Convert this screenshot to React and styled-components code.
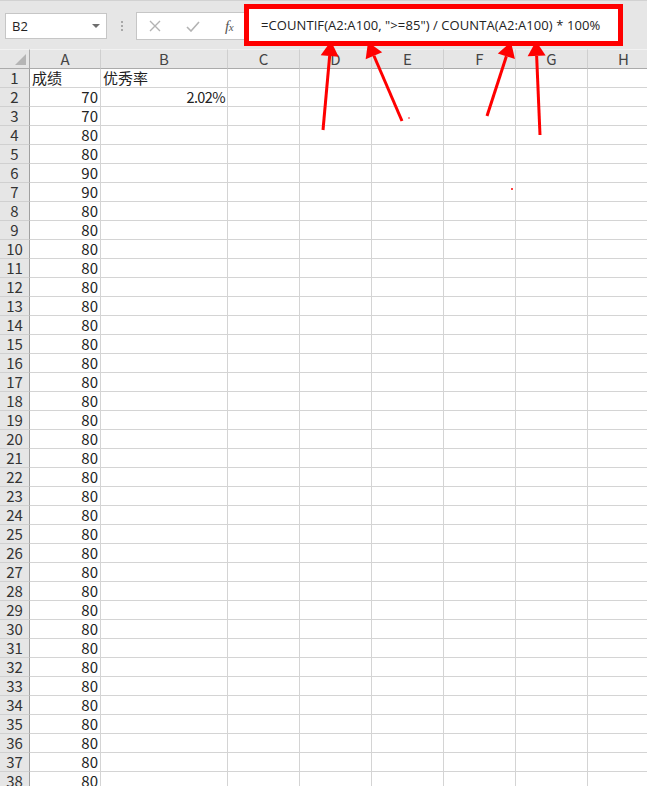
import React from 'react';
import styled, { createGlobalStyle } from 'styled-components';

const Global = createGlobalStyle`
  html, body { margin: 0; padding: 0; background: #fff; overflow: hidden; }
  body { width: 647px; height: 786px; font-family: "Noto Sans CJK SC", "Liberation Sans", sans-serif; }
`;

const Page = styled.div`
  position: relative;
  width: 647px;
  height: 786px;
  overflow: hidden;
  background: #fff;
`;

const Toolbar = styled.div`
  box-sizing: border-box;
  height: 49px;
  background: #e6e6e6;
  border-top: 1px solid #d2d2d2;
  display: flex;
  align-items: flex-start;
  padding-left: 5px;
`;

const NameBox = styled.div`
  box-sizing: border-box;
  margin-top: 12px;
  width: 102px;
  height: 26px;
  background: #fff;
  border: 1px solid #c6c6c6;
  display: flex;
  align-items: center;
  justify-content: space-between;
  padding: 0 6px 0 6px;
  font-family: "Open Sans", "Noto Sans", sans-serif;
  font-size: 13px;
  color: #222;
`;

const Caret = styled.span`
  width: 0;
  height: 0;
  border-left: 4px solid transparent;
  border-right: 4px solid transparent;
  border-top: 4px solid #6e6e6e;
`;

const Grip = styled.div`
  margin: 20px 13px 0 14px;
  display: flex;
  flex-direction: column;
  gap: 2px;
  span { width: 2px; height: 2px; background: #a8a8a8; }
`;

const FxGroup = styled.div`
  box-sizing: border-box;
  margin-top: 11px;
  width: 112px;
  height: 28px;
  background: #fff;
  border: 1px solid #c6c6c6;
  border-right: none;
  display: flex;
  align-items: center;
  padding-left: 11px;
`;

const IconSlot = styled.div`
  width: ${p => p.w}px;
  display: flex;
  align-items: center;
  justify-content: center;
`;

const FxText = styled.span`
  font-family: "Liberation Serif", "DejaVu Serif", serif;
  font-style: italic;
  font-size: 15px;
  color: #555;
  letter-spacing: -0.5px;
  sub { font-size: 11px; vertical-align: 0; }
`;

const FormulaField = styled.div`
  box-sizing: border-box;
  margin-top: 3px;
  margin-left: -4px;
  width: 379px;
  height: 42px;
  border: 5px solid #ff0000;
  background: #fff;
  display: flex;
  align-items: center;
  padding-left: 12px;
  font-family: "Open Sans", "Noto Sans", sans-serif;
  font-size: 13px;
  letter-spacing: 0.08px;
  color: #222;
  white-space: nowrap;
  position: relative;
  z-index: 1;
`;

const Sheet = styled.div`
  display: grid;
  grid-template-columns: 30px 71px 127px repeat(6, 72px);
  grid-auto-rows: 19px;
  grid-template-rows: 20px;
  font-size: 15px;
  color: #222;
`;

const Cell = styled.div`
  box-sizing: border-box;
  border-right: 1px solid #d4d4d4;
  border-bottom: 1px solid #d4d4d4;
  display: flex;
  align-items: flex-end;
  justify-content: ${p => (p.right ? 'flex-end' : 'flex-start')};
  padding: 0 2px 0 2px;
  line-height: 18px;
  white-space: nowrap;
`;

const Pct = styled.span`
  letter-spacing: -0.6px;
  font-size: 14.5px;
`;

const ColHead = styled.div`
  box-sizing: border-box;
  background: #e6e6e6;
  border-right: 1px solid #cfcfcf;
  border-bottom: 1px solid #ababab;
  border-top: 1px solid #f2f2f2;
  display: flex;
  align-items: center;
  justify-content: center;
  color: #444;
  line-height: 18px;
`;

const Corner = styled(ColHead)`
  position: relative;
  border-right: 1px solid #ababab;
  &::after {
    content: '';
    position: absolute;
    right: 3px;
    bottom: 3px;
    width: 0;
    height: 0;
    border-left: 11px solid transparent;
    border-bottom: 11px solid #b5b5b5;
  }
`;

const RowHead = styled.div`
  box-sizing: border-box;
  background: #e6e6e6;
  border-right: 1px solid #a0a0a0;
  border-bottom: 1px solid #d0d0d0;
  display: flex;
  align-items: flex-end;
  justify-content: center;
  color: #333;
  line-height: 18px;
`;

const Overlay = styled.svg`
  position: absolute;
  left: 0;
  top: 0;
  pointer-events: none;
  z-index: 2;
`;

const cols = ['A', 'B', 'C', 'D', 'E', 'F', 'G', 'H'];
const values = [70, 70, 80, 80, 90, 90];

const arrows = [
  [323, 130, 331, 41],
  [402, 121, 368, 42],
  [487, 116, 511, 42],
  [540, 135, 536, 41],
];

function Arrow({ sx, sy, tx, ty }) {
  const dx = tx - sx;
  const dy = ty - sy;
  const len = Math.hypot(dx, dy);
  const ux = dx / len;
  const uy = dy / len;
  const bx = tx - ux * 15;
  const by = ty - uy * 15;
  const nx = -uy * 9;
  const ny = ux * 9;
  return (
    <g>
      <line x1={sx} y1={sy} x2={bx} y2={by} stroke="#ff0000" strokeWidth="3" />
      <polygon points={`${tx},${ty} ${bx + nx},${by + ny} ${bx - nx},${by - ny}`} fill="#ff0000" />
    </g>
  );
}

export default function App() {
  const rows = [];
  for (let r = 1; r <= 38; r++) {
    const cells = [<RowHead key="h">{r}</RowHead>];
    cols.forEach(c => {
      let content = null;
      let right = false;
      if (r === 1 && c === 'A') content = '成绩';
      else if (r === 1 && c === 'B') content = '优秀率';
      else if (c === 'A') {
        content = values[r - 2] !== undefined ? values[r - 2] : 80;
        right = true;
      } else if (r === 2 && c === 'B') {
        content = <Pct>2.02%</Pct>;
        right = true;
      }
      cells.push(
        <Cell key={c} right={right}>
          {content}
        </Cell>
      );
    });
    rows.push(<React.Fragment key={r}>{cells}</React.Fragment>);
  }

  return (
    <Page>
      <Global />
      <Toolbar>
        <NameBox>
          B2
          <Caret />
        </NameBox>
        <Grip>
          <span />
          <span />
          <span />
        </Grip>
        <FxGroup>
          <IconSlot w={14}>
            <svg width="12" height="12" viewBox="0 0 12 12">
              <path d="M1 1 L11 11 M11 1 L1 11" stroke="#b3b3b3" strokeWidth="1.4" fill="none" />
            </svg>
          </IconSlot>
          <IconSlot w={24} />
          <IconSlot w={14}>
            <svg width="14" height="11" viewBox="0 0 14 11">
              <path d="M1 6 L5 10 L13 1" stroke="#b3b3b3" strokeWidth="1.6" fill="none" />
            </svg>
          </IconSlot>
          <IconSlot w={21} />
          <IconSlot w={16}>
            <FxText>
              f<sub>x</sub>
            </FxText>
          </IconSlot>
        </FxGroup>
        <FormulaField>=COUNTIF(A2:A100, "&gt;=85") / COUNTA(A2:A100) * 100%</FormulaField>
      </Toolbar>
      <Sheet>
        <Corner />
        {cols.map(c => (
          <ColHead key={c}>{c}</ColHead>
        ))}
        {rows}
      </Sheet>
      <Overlay width="647" height="786" viewBox="0 0 647 786">
        {arrows.map(([sx, sy, tx, ty], i) => (
          <Arrow key={i} sx={sx} sy={sy} tx={tx} ty={ty} />
        ))}
        <circle cx="409" cy="118" r="0.8" fill="#ff0000" />
        <circle cx="512" cy="189" r="1" fill="#ff0000" />
      </Overlay>
    </Page>
  );
}
